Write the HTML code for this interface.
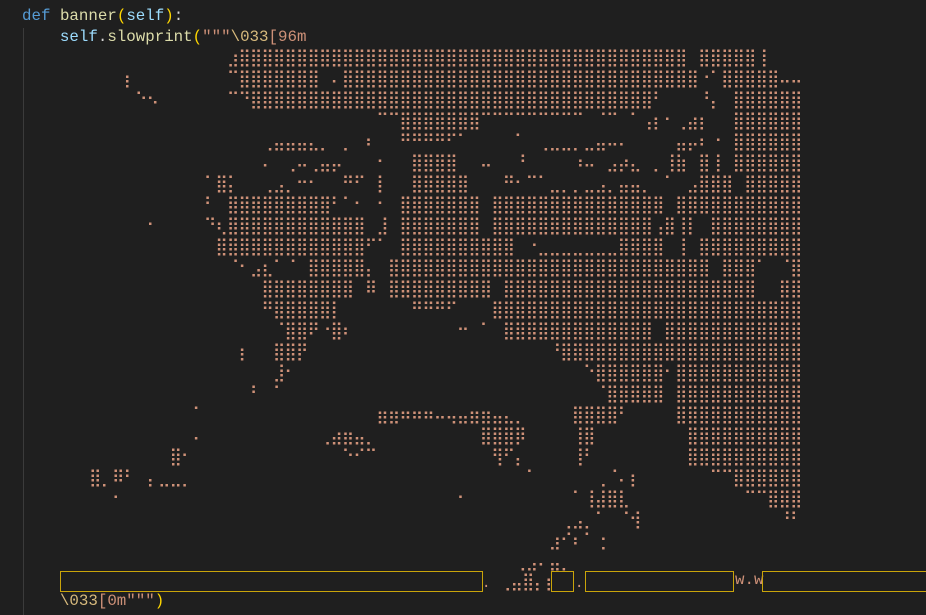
<!DOCTYPE html>
<html><head><meta charset="utf-8"><style>
html,body{margin:0;padding:0;background:#1f1f1f;width:926px;height:615px;overflow:hidden}
.c{position:absolute;left:22px;height:21px;line-height:21px;font-family:"Liberation Mono","DejaVu Sans Mono",monospace;font-size:15.8px;white-space:pre;color:#d4d4d4}
.k{color:#569cd6}.f{color:#dcdcaa}.p{color:#ffd700}.s{color:#9cdcfe}.o{color:#ce9178}.e{color:#d7ba7d}
.guide{position:absolute;left:23px;top:28px;width:1px;height:587px;background:#3b3b3b}
.art{position:absolute;left:89px;top:48px;margin:0;font-family:"DejaVu Sans Mono",monospace;font-size:17px;letter-spacing:-0.96px;line-height:21px;color:#ce9178;white-space:pre}
.box{position:absolute;top:571px;height:19px;border:1px solid #c9a40a;box-sizing:content-box}
.t{position:absolute;font-family:"DejaVu Sans Mono",monospace;color:#ce9178;white-space:pre;line-height:21px}
</style></head><body>
<div class="guide"></div>
<div class="c" style="top:6px"><span class="k">def</span> <span class="f">banner</span><span class="p">(</span><span class="s">self</span><span class="p">)</span>:</div>
<div class="c" style="top:27px">    <span class="s">self</span>.<span class="f">slowprint</span><span class="p">(</span><span class="o">"""</span><span class="e">\033</span><span class="o">[96m</span></div>
<pre class="art">⠀⠀⠀⠀⠀⠀⠀⠀⠀⠀⠀⠀⣰⣿⣿⣿⣿⣿⣿⣿⣿⣿⣿⣿⣿⣿⣿⣿⣿⣿⣿⣿⣿⣿⣿⣿⣿⣿⣿⣿⣿⣿⣿⣿⣿⣿⣿⣿⣿⣿⣿⣿⠀⣿⣿⣿⣿⣿⢸
⠀⠀⠀⡆⠀⠀⠀⠀⠀⠀⠀⠀⠉⣿⣿⣿⣿⣿⣿⣿⠀⠄⣿⣿⣿⣿⣿⣿⣿⣿⣿⣿⣿⣿⣿⣿⣿⣿⣿⣿⣿⣿⣿⣿⣿⣿⣿⣿⣿⣿⣿⣿⣿⠐⠁⣿⣿⣿⣿⣿⠤⠤
⠀⠀⠀⠀⠑⠢⠀⠀⠀⠀⠀⠀⠉⠙⣿⣿⣿⣿⣿⣿⣿⣿⣿⣿⣿⣿⣿⣿⣿⣿⣿⣿⣿⣿⣿⣿⣿⣿⣿⣿⣿⣿⣿⣿⣿⣿⣿⣿⣿⠃⠀⠀⠀⠘⡄⠀⣿⣿⣿⣿⣿⣿
⠀⠀⠀⠀⠀⠀⠀⠀⠀⠀⠀⠀⠀⠀⠀⠀⠀⠀⠀⠀⠀⠀⠀⠀⠀⠉⠉⣿⣿⣿⣿⣿⣿⣿⠉⠉⠉⠉⠉⠉⠉⠉⠉⠀⠈⠉⠀⠁⢠⡆⠂⢀⣴⡆⠀⠀⣿⣿⣿⣿⣿⣿
⠀⠀⠀⠀⠀⠀⠀⠀⠀⠀⠀⠀⠀⠀⠀⢀⣤⣤⣤⣄⡀⠀⡀⠀⠆⠀⠀⠛⠛⠛⠛⠋⠁⠀⠀⠀⠀⠁⠀⢀⣀⣀⡀⣀⣤⠤⠄⠀⠀⠀⠀⣤⡤⠆⠐⠀⣿⣿⣿⣿⣿⣿
⠀⠀⠀⠀⠀⠀⠀⠀⠀⠀⠀⠀⠀⠀⠀⠄⠀⢀⠤⢀⣤⡤⠀⠀⠀⠂⠀⠀⣿⣿⣿⣿⠀⠀⠤⠀⠀⠘⠀⠀⠀⠀⠰⠤⠀⣠⡴⣄⠀⡀⢸⣷⠀⣿⢸⠀⣿⣿⣿⣿⣿⣿
⠀⠀⠀⠀⠀⠀⠀⠀⠀⠀⠁⣿⡅⠀⠀⢀⣠⡀⠒⠂⠀⠀⠛⠋⠀⡇⠀⠀⣿⣿⣿⣿⣿⠀⠀⠀⠛⠂⠉⠁⣀⡀⡀⣀⣠⡀⣤⣤⡀⠀⠁⠀⣠⣿⣿⣿⠀⣿⣿⣿⣿⣿
⠀⠀⠀⠀⠀⠀⠀⠀⠀⠀⠃⠀⣿⣿⣿⣿⣿⣿⣿⣿⣿⠃⠁⠂⠀⠂⠀⣿⣿⣿⣿⣿⣿⣿⠀⣿⣿⣿⣿⣿⣿⣿⣿⣿⣿⣿⣿⣿⣿⣿⠀⣿⣿⣿⣿⣿⣿⣿⣿⣿⣿⣿
⠀⠀⠀⠀⠀⠂⠀⠀⠀⠀⠙⢆⣿⣿⣿⣿⣿⣿⣿⣿⣿⣿⣿⣿⠀⣸⠀⣿⣿⣿⣿⣿⣿⣿⠀⣿⣿⣿⣿⣿⣿⣿⣿⣿⣿⣿⣿⣿⣿⢠⣿⢸⡇⠀⣿⣿⣿⣿⣿⣿⣿⣿
⠀⠀⠀⠀⠀⠀⠀⠀⠀⠀⠀⣿⣿⣿⣿⣿⣿⣿⣿⣿⣿⣿⣿⣿⠋⠁⠀⣿⣿⣿⣿⣿⣿⣿⣿⣿⣿⠀⠐⣀⣀⣀⣀⣀⣀⣀⣿⣿⣿⣿⠀⢸⠀⣿⣿⣿⣿⣿⣿⣿⣿⣿
⠀⠀⠀⠀⠀⠀⠀⠀⠀⠀⠀⠀⠈⠂⣠⣆⠁⠈⠀⣿⣿⣿⣿⣿⡄⠀⣿⣿⣿⣿⣿⣿⣿⣿⣿⣿⣿⣿⣿⣿⣿⣿⣿⣿⣿⣿⣿⣿⣿⣿⣿⣿⣿⣿⠀⣿⣿⣿⠁⠀⠈⣿
⠀⠀⠀⠀⠀⠀⠀⠀⠀⠀⠀⠀⠀⠀⠀⣿⣿⣿⣿⣿⣿⣿⣿⠀⠿⠀⣿⣿⣿⣿⣿⣿⣿⣿⣿⠀⣿⣿⣿⣿⣿⣿⣿⣿⣿⣿⣿⣿⣿⣿⣿⣿⣿⣿⣿⣿⣿⣿⠀⠀⣿⣿
⠀⠀⠀⠀⠀⠀⠀⠀⠀⠀⠀⠀⠀⠀⠀⠛⣿⣿⣿⣿⣿⡇⠀⠀⠀⠀⠀⠀⠛⠛⠛⠋⠀⠀⠀⣿⣿⣿⣿⣿⣿⣿⣿⣿⣿⣿⣿⣿⣿⣿⣿⣿⣿⣿⣿⣿⣿⣿⣿⣿⣿⣿
⠀⠀⠀⠀⠀⠀⠀⠀⠀⠀⠀⠀⠀⠀⠀⠀⠈⣿⣿⠟⠐⣿⠆⠀⠀⠀⠀⠀⠀⠀⠀⠀⠒⠀⠁⠀⣿⣿⣿⣿⣿⣿⣿⣿⣿⣿⣿⣿⣿⠀⣿⣿⣿⣿⣿⣿⣿⣿⣿⣿⣿⣿
⠀⠀⠀⠀⠀⠀⠀⠀⠀⠀⠀⠀⠀⡆⠀⠀⣿⣿⡟⠀⠀⠀⠀⠀⠀⠀⠀⠀⠀⠀⠀⠀⠀⠀⠀⠀⠀⠀⠀⠀⠘⣿⣿⣿⣿⣿⣿⣿⣿⣿⣿⣿⣿⣿⣿⣿⣿⣿⣿⣿⣿⣿
⠀⠀⠀⠀⠀⠀⠀⠀⠀⠀⠀⠀⠀⠀⠀⠀⣸⠂⠀⠀⠀⠀⠀⠀⠀⠀⠀⠀⠀⠀⠀⠀⠀⠀⠀⠀⠀⠀⠀⠀⠀⠀⠀⠑⣿⣿⣿⣿⣿⣿⠂⣿⣿⣿⣿⣿⣿⣿⣿⣿⣿⣿
⠀⠀⠀⠀⠀⠀⠀⠀⠀⠀⠀⠀⠀⠀⠃⠀⠁⠀⠀⠀⠀⠀⠀⠀⠀⠀⠀⠀⠀⠀⠀⠀⠀⠀⠀⠀⠀⠀⠀⠀⠀⠀⠀⠀⠈⣿⣿⣿⣿⣿⠀⣿⣿⣿⣿⣿⣿⣿⣿⣿⣿⣿
⠀⠀⠀⠀⠀⠀⠀⠀⠀⠁⠀⠀⠀⠀⠀⠀⠀⠀⠀⠀⠀⠀⠀⠀⠀⣶⣶⠶⠶⠶⠤⢤⣤⣶⣶⣤⣄⡀⠀⠀⠀⠀⣿⣿⣿⣿⠃⠀⠀⠀⠀⣿⣿⣿⣿⣿⣿⣿⣿⣿⣿⣿
⠀⠀⠀⠀⠀⠀⠀⠀⠀⠄⠀⠀⠀⠀⠀⠀⠀⠀⠀⠀⢀⣴⣶⣤⡀⠀⠀⠀⠀⠀⠀⠀⠀⠀⣿⣿⣿⡿⠀⠀⠀⠀⢸⣿⠀⠀⠀⠀⠀⠀⠀⠀⣿⣿⣿⣿⣿⣿⣿⣿⣿⣿
⠀⠀⠀⠀⠀⠀⠀⣿⠂⠀⠀⠀⠀⠀⠀⠀⠀⠀⠀⠀⠀⠀⠑⠊⠉⠀⠀⠀⠀⠀⠀⠀⠀⠀⠀⢻⠋⡄⠀⠀⠀⠀⢸⠃⠀⠀⠀⠀⠀⠀⠀⠀⣿⣿⣿⣿⣿⣿⣿⣿⣿⣿
⣿⡀⠿⠃⠀⡄⣀⣀⡀⠀⠀⠀⠀⠀⠀⠀⠀⠀⠀⠀⠀⠀⠀⠀⠀⠀⠀⠀⠀⠀⠀⠀⠀⠀⠀⠀⠀⠀⠁⠀⠀⠀⠀⠀⢀⠈⠄⡆⠀⠀⠀⠀⠀⠀⠉⠉⣿⣿⣿⣿⣿⣿
⠀⠀⠂⠀⠀⠀⠀⠀⠀⠀⠀⠀⠀⠀⠀⠀⠀⠀⠀⠀⠀⠀⠀⠀⠀⠀⠀⠀⠀⠀⠀⠀⠂⠀⠀⠀⠀⠀⠀⠀⠀⠀⠁⢸⣼⣿⣇⠀⠀⠀⠀⠀⠀⠀⠀⠀⠀⠉⠉⣿⣿⣿
⠀⠀⠀⠀⠀⠀⠀⠀⠀⠀⠀⠀⠀⠀⠀⠀⠀⠀⠀⠀⠀⠀⠀⠀⠀⠀⠀⠀⠀⠀⠀⠀⠀⠀⠀⠀⠀⠀⠀⠀⠀⢀⣠⡀⠁⠀⠈⢺⠀⠀⠀⠀⠀⠀⠀⠀⠀⠀⠀⠀⠘⠃
⠀⠀⠀⠀⠀⠀⠀⠀⠀⠀⠀⠀⠀⠀⠀⠀⠀⠀⠀⠀⠀⠀⠀⠀⠀⠀⠀⠀⠀⠀⠀⠀⠀⠀⠀⠀⠀⠀⠀⠀⣰⠊⠆⠁⢐
⠀⠀⠀⠀⠀⠀⠀⠀⠀⠀⠀⠀⠀⠀⠀⠀⠀⠀⠀⠀⠀⠀⠀⠀⠀⠀⠀⠀⠀⠀⠀⠀⠀⠀⠀⠀⠀⢀⣠⠄⣤⡀</pre>
<div class="box" style="left:60px;width:421px"></div>
<div class="t" style="left:482px;top:573px;font-size:14px">.</div>
<div class="t" style="left:499px;top:572px;font-size:17px;letter-spacing:-0.96px">⢀⣤⣿⡄⡆</div>
<div class="box" style="left:551px;width:21px"></div>
<div class="t" style="left:575px;top:573px;font-size:14px">.</div>
<div class="box" style="left:585px;width:147px"></div>
<div class="c" style="left:735px;top:570px;color:#ce9178">w.w</div>
<div class="box" style="left:762px;width:170px"></div>
<div class="c" style="top:591px">    <span class="e">\033</span><span class="o">[0m"""</span><span class="p">)</span></div>
</body></html>
